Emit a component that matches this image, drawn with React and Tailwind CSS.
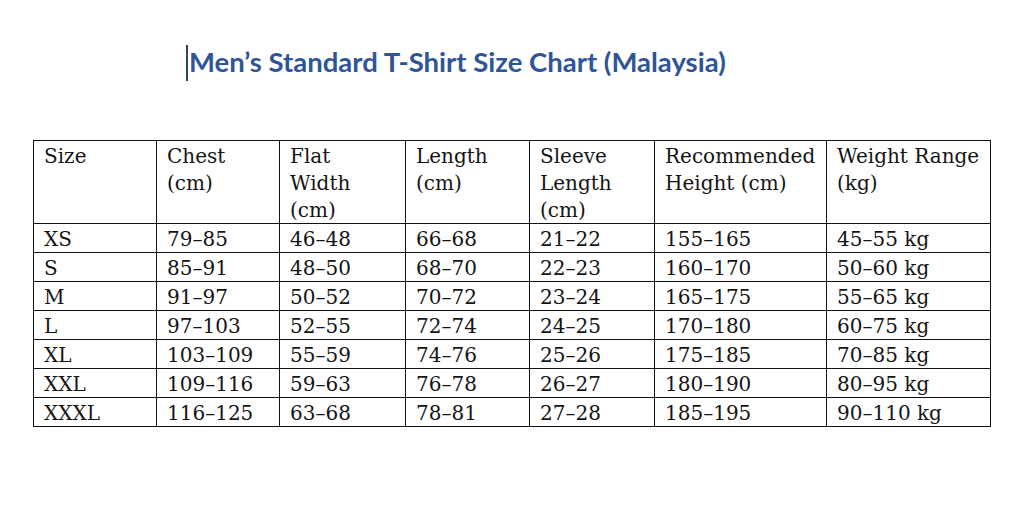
import React from 'react';

const headers = [
  ['Size'],
  ['Chest', '(cm)'],
  ['Flat', 'Width', '(cm)'],
  ['Length', '(cm)'],
  ['Sleeve', 'Length', '(cm)'],
  ['Recommended', 'Height (cm)'],
  ['Weight Range', '(kg)'],
];

const rows = [
  ['XS', '79–85', '46–48', '66–68', '21–22', '155–165', '45–55 kg'],
  ['S', '85–91', '48–50', '68–70', '22–23', '160–170', '50–60 kg'],
  ['M', '91–97', '50–52', '70–72', '23–24', '165–175', '55–65 kg'],
  ['L', '97–103', '52–55', '72–74', '24–25', '170–180', '60–75 kg'],
  ['XL', '103–109', '55–59', '74–76', '25–26', '175–185', '70–85 kg'],
  ['XXL', '109–116', '59–63', '76–78', '26–27', '180–190', '80–95 kg'],
  ['XXXL', '116–125', '63–68', '78–81', '27–28', '185–195', '90–110 kg'],
];

const widths = [123, 123, 126, 124, 125, 172, 164];

export default function App() {
  return (
    <div className="w-[1024px] h-[508px] bg-white overflow-hidden">
      <div className="pt-[44px] pl-[186px] flex items-start">
        <div className="w-[2px] h-[36px] bg-[#34425e] mt-[1px]" />
        <h1
          className="ml-[1px] text-[27.5px] leading-[36px] font-bold text-[#2f5597]"
          style={{ fontFamily: 'Lato, "Open Sans", sans-serif' }}
        >
          Men’s Standard T-Shirt Size Chart (Malaysia)
        </h1>
      </div>

      <table
        className="ml-[33px] mt-[59px] table-fixed border-collapse text-[#141414] text-[20px]"
        style={{ fontFamily: '"DejaVu Serif", "Liberation Serif", serif', width: 958 }}
      >
        <colgroup>
          {widths.map((w, i) => (
            <col key={i} style={{ width: w }} />
          ))}
        </colgroup>
        <thead>
          <tr className="h-[83px]">
            {headers.map((h, i) => (
              <th
                key={i}
                className="border border-[#111] align-top text-left font-normal px-[10px] pt-[2px] leading-[27px]"
              >
                <div className="h-[80px] whitespace-nowrap">
                  {h.map((line, j) => (
                    <div key={j}>{line}</div>
                  ))}
                </div>
              </th>
            ))}
          </tr>
        </thead>
        <tbody>
          {rows.map((r, i) => (
            <tr key={i} className="h-[29px]">
              {r.map((c, j) => (
                <td
                  key={j}
                  className="border border-[#111] align-top px-[10px] pt-[3px] leading-[25px] whitespace-nowrap"
                >
                  {c}
                </td>
              ))}
            </tr>
          ))}
        </tbody>
      </table>
    </div>
  );
}
